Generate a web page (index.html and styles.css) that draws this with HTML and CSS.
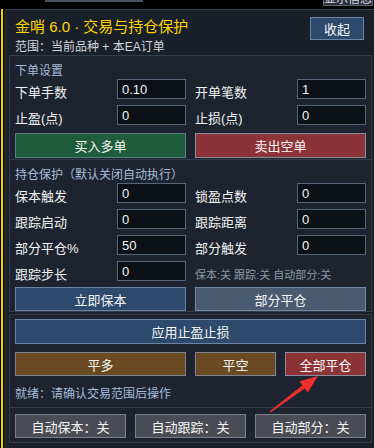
FILE: index.html
```html
<!DOCTYPE html>
<html lang="zh-CN">
<head>
    <meta charset="UTF-8">
    <meta name="viewport" content="width=device-width, initial-scale=1.0">
    <title>金哨 6.0 交易面板</title>
    <link rel="stylesheet" href="styles.css">
</head>
<body>
    <div class="topbar">
        <div class="tb-line"></div>
        <div class="tb-show">显示信息</div>
    </div>

    <div class="frame">
        <div class="panel">
            <div class="head">
                <div>
                    <div class="title">金哨 6.0 · 交易与持仓保护</div>
                    <div class="scope">范围：当前品种 + 本EA订单</div>
                </div>
                <button class="btn btn-blue btn-fold">收起</button>
            </div>

            <div class="section sec-order">
                <div class="sec-title">下单设置</div>
                <div class="grid">
                    <div class="field"><span class="label">下单手数</span><input class="inp" value="0.10"></div>
                    <div class="field"><span class="label">开单笔数</span><input class="inp" value="1"></div>
                    <div class="field"><span class="label">止盈(点)</span><input class="inp" value="0"></div>
                    <div class="field"><span class="label">止损(点)</span><input class="inp" value="0"></div>
                </div>
                <div class="btn-row two">
                    <button class="btn btn-green">买入多单</button>
                    <button class="btn btn-red">卖出空单</button>
                </div>
            </div>

            <div class="section sec-protect">
                <div class="sec-title">持仓保护（默认关闭自动执行）</div>
                <div class="grid">
                    <div class="field"><span class="label">保本触发</span><input class="inp" value="0"></div>
                    <div class="field"><span class="label">锁盈点数</span><input class="inp" value="0"></div>
                    <div class="field"><span class="label">跟踪启动</span><input class="inp" value="0"></div>
                    <div class="field"><span class="label">跟踪距离</span><input class="inp" value="0"></div>
                    <div class="field"><span class="label">部分平仓%</span><input class="inp" value="50"></div>
                    <div class="field"><span class="label">部分触发</span><input class="inp" value="0"></div>
                    <div class="field"><span class="label">跟踪步长</span><input class="inp" value="0"></div>
                    <div class="field"><span class="note">保本:关 跟踪:关 自动部分:关</span></div>
                </div>
                <div class="btn-row two tight">
                    <button class="btn btn-blue">立即保本</button>
                    <button class="btn btn-slate">部分平仓</button>
                </div>
            </div>

            <div class="section sec-close">
                <button class="btn btn-blue btn-wide">应用止盈止损</button>
                <div class="btn-row three">
                    <button class="btn btn-brown">平多</button>
                    <button class="btn btn-brown">平空</button>
                    <button class="btn btn-red">全部平仓</button>
                </div>
                <div class="status">就绪：请确认交易范围后操作</div>
            </div>

            <div class="section sec-auto">
                <div class="btn-row auto">
                    <button class="btn btn-gray">自动保本：关</button>
                    <button class="btn btn-gray">自动跟踪：关</button>
                    <button class="btn btn-gray">自动部分：关</button>
                </div>
            </div>
        </div>
    </div>

    <svg class="arrow" width="374" height="448" viewBox="0 0 374 448">
        <polygon points="269.5,411.5 302.4,385.2 299.4,381.2 318,376 307.8,392.4 304.8,388.4 270.5,412.6" fill="#ec2f2a"/>
    </svg>
</body>
</html>
```

FILE: styles.css
```css
body {
    margin: 0;
    background: #000;
    font-family: "Liberation Sans", "Noto Sans CJK SC", sans-serif;
    color: #f2f2f2;
    width: 374px;
    height: 448px;
    overflow: hidden;
    position: relative;
}
.topbar {
    height: 9px;
    display: flex;
    align-items: flex-start;
    background: #000;
}
.tb-line {
    margin-left: 45px;
    width: 98px;
    height: 2px;
    background: #4b515c;
}
.tb-show {
    margin-left: auto;
    margin-right: 1px;
    margin-top: -16px;
    width: 50px;
    height: 22px;
    box-sizing: border-box;
    border: 1px solid #5d6675;
    background: #2a3039;
    font-size: 12px;
    line-height: 28px;
    text-align: center;
    color: #d8dbe0;
    overflow: hidden;
}
.frame {
    height: 439px;
    margin-left: 1px;
    border-left: 2px solid #f4d000;
    padding-left: 2px;
    background: #0e1218;
}
.panel {
    height: 100%;
    box-sizing: border-box;
    border-left: 1px solid #2b323d;
    border-top: 1px solid #39424f;
    background: #1a2029;
    padding: 0 2px 0 3px;
}
.head {
    display: flex;
    justify-content: space-between;
    align-items: flex-start;
    padding: 7px 8px 1px 6px;
}
.title {
    color: #ffd500;
    font-size: 15px;
    line-height: 20px;
}
.scope {
    margin-top: 3px;
    font-size: 12px;
    line-height: 14px;
    color: #d3d7dd;
}
.section {
    border: 1px solid #333c49;
    background: #1d2430;
    padding: 8px 4px 1px 5px;
}
.sec-protect {
    margin-top: -1px;
    padding-bottom: 0;
}
.sec-close {
    margin-top: 2px;
    padding: 4px 4px 5px 5px;
}
.sec-auto {
    margin-top: -1px;
    padding: 6px 4px 4px 5px;
}
.sec-title {
    font-size: 12px;
    line-height: 15px;
    color: #a7bcd9;
}
.grid {
    display: grid;
    grid-template-columns: 171px 171px;
    column-gap: 9px;
    row-gap: 6px;
}
.field {
    display: flex;
    height: 20px;
}
.label {
    width: 102px;
    font-size: 13px;
    line-height: 28px;
    white-space: nowrap;
}
.note {
    font-size: 11px;
    line-height: 28px;
    color: #8e98a4;
    white-space: nowrap;
}
.inp {
    width: 69px;
    height: 20px;
    box-sizing: border-box;
    margin: 0;
    border: 1px solid #56657a;
    background: #0c1017;
    color: #f4f4f4;
    font-family: "Liberation Sans", "Noto Sans CJK SC", sans-serif;
    font-size: 13px;
    padding: 0 4px;
    outline: none;
}
.btn-row {
    display: grid;
    column-gap: 9px;
    margin-top: 8px;
}
.btn-row.two {
    grid-template-columns: 171px 171px;
}
.btn-row.tight {
    margin-top: 6px;
}
.btn-row.three {
    grid-template-columns: 171px 81px 81px;
}
.btn-row.auto {
    grid-template-columns: 111px 111px 111px;
    margin-top: 0;
}
.btn {
    height: 24px;
    box-sizing: border-box;
    margin: 0;
    padding: 0;
    border: 1px solid #6f8197;
    font-family: "Liberation Sans", "Noto Sans CJK SC", sans-serif;
    font-size: 13px;
    color: #f6f6f6;
    cursor: pointer;
}
.two .btn {
    height: 25px;
}
.tight .btn {
    height: 24px;
}
.btn-fold {
    width: 54px;
    height: 23px;
}
.btn-wide {
    width: 351px;
    height: 25px;
    display: block;
}
.btn-blue {
    background: #2d4a6d;
    border-color: #6c84a3;
}
.btn-green {
    background: #1e5c3b;
    border-color: #5f7d8c;
}
.btn-red {
    background: #8c3338;
    border-color: #8a8e9a;
}
.btn-slate {
    background: #4a5a70;
    border-color: #7388a2;
}
.btn-brown {
    background: #694a22;
    border-color: #7e8492;
}
.btn-gray {
    background: #4a4c55;
    border-color: #7b808c;
}
.status {
    margin-top: 10px;
    font-size: 12px;
    line-height: 16px;
    color: #a7bcd9;
}
.arrow {
    position: absolute;
    left: 0;
    top: 0;
    pointer-events: none;
}
```
